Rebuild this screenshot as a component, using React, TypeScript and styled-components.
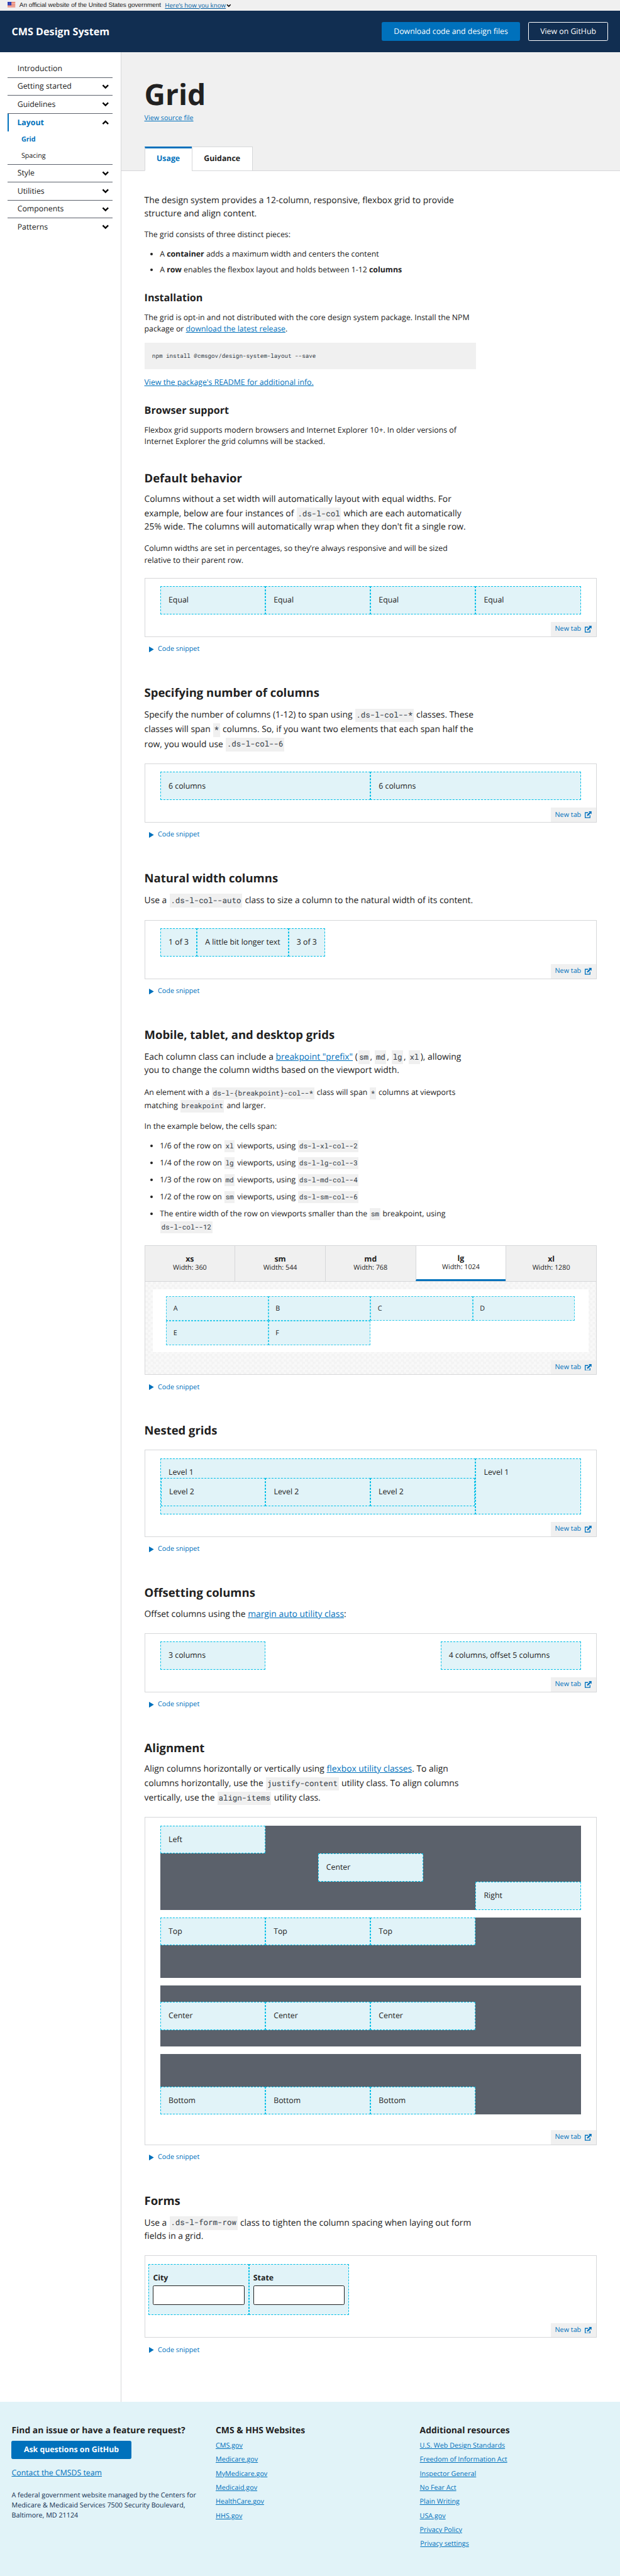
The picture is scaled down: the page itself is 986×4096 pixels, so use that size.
import React from "react";
import styled, { createGlobalStyle, css } from "styled-components";

const color = {
  ink: "#212121",
  navy: "#112e51",
  primary: "#0071bc",
  muted: "#5b616b",
  line: "#d6d7d9",
  pale: "#f0f0f0",
  sky: "#e1f3f8",
  dash: "#00bfe7",
};

const GlobalStyle = createGlobalStyle`
  *, *::before, *::after { box-sizing: border-box; }
  html, body { margin: 0; padding: 0; background: #fff; }
  body { overflow-x: hidden; text-rendering: geometricPrecision; }
  h1, h2, h3, p, ul, pre { margin: 0; padding: 0; }
`;

const Page = styled.div`
  zoom: 0.7703;
  width: 1280px;
  height: 5318px;
  overflow: hidden;
  display: flex;
  flex-direction: column;
  color: ${color.ink};
  font-family: "Open Sans", "Noto Sans", sans-serif;
  font-size: 16px;
  line-height: 24px;
`;

/* ---------- top bars ---------- */

const GovBanner = styled.div`
  height: 22px;
  padding: 0 16px;
  display: flex;
  align-items: center;
  background: ${color.pale};
  font-family: "Liberation Sans", Arial, sans-serif;
  font-size: 12.95px;
  line-height: 18px;
  white-space: nowrap;
`;

const FlagIcon = styled.svg`
  width: 16px;
  height: 11px;
  margin: 0 8px 3px 0;
`;

const BannerLink = styled.a`
  margin: 0 1px 0 8px;
  color: #005ea2;
  font-family: "Open Sans", sans-serif;
  font-size: 12.7px;
  text-decoration: underline;
`;

const Header = styled.header`
  height: 86px;
  padding: 0 24px;
  display: flex;
  align-items: center;
  background: ${color.navy};
  color: #fff;
`;

const Brand = styled.span`
  flex: 1;
  font-size: 21px;
  font-weight: 700;
`;

const Button = styled.a<{ $variant?: "solid" | "outline"; $bold?: boolean }>`
  display: inline-flex;
  align-items: center;
  justify-content: center;
  height: 38px;
  padding: 0 24px;
  border: 1px solid ${(p) => (p.$variant === "outline" ? "#fff" : color.primary)};
  border-radius: 3px;
  background: ${(p) => (p.$variant === "outline" ? "transparent" : color.primary)};
  color: #fff;
  font-size: 16px;
  font-weight: ${(p) => (p.$bold ? 700 : 400)};
  white-space: nowrap;
`;

const HeaderActions = styled.div`
  display: flex;
  gap: 16px;
`;

/* ---------- sidebar ---------- */

const Body = styled.div`
  height: 4850px;
  display: flex;
`;

const Sidebar = styled.nav`
  flex: none;
  width: 250px;
  padding: 16px;
  border-right: 1px solid ${color.line};
`;

const NavItem = styled.div<{ $current?: boolean; $rule?: boolean }>`
  height: ${(p) => (p.$rule ? 37 : 36)}px;
  padding: 0 8px 0 ${(p) => (p.$current ? 17 : 20)}px;
  display: flex;
  align-items: center;
  justify-content: space-between;
  ${(p) => p.$rule && css`border-bottom: 1px solid ${color.muted};`}
  ${(p) =>
    p.$current &&
    css`
      border-left: 3px solid ${color.primary};
      color: ${color.primary};
      font-weight: 700;
    `}
`;

const SubNav = styled.div`
  height: 69px;
  border-bottom: 1px solid ${color.muted};
`;

const SubNavItem = styled.div<{ $current?: boolean }>`
  height: 34px;
  padding-left: 28px;
  font-size: 14px;
  line-height: 34px;
  ${(p) => p.$current && css`color: ${color.primary}; font-weight: 700;`}
`;

const ChevronIcon = styled.svg<{ $size?: number; $up?: boolean }>`
  width: ${(p) => p.$size ?? 15}px;
  height: ${(p) => p.$size ?? 15}px;
  color: #000;
  ${(p) => p.$up && css`transform: rotate(180deg);`}
`;

/* ---------- main column ---------- */

const Main = styled.main`
  width: 1030px;
`;

const Hero = styled.div`
  height: 245px;
  padding: 48px 48px 0;
  display: flex;
  flex-direction: column;
  align-items: flex-start;
  background: ${color.pale};
  border-bottom: 1px solid ${color.line};
`;

const Title = styled.h1`
  font-size: 60px;
  line-height: 78px;
`;

const SourceLink = styled.a`
  font-size: 14px;
  line-height: 21px;
  color: ${color.primary};
  text-decoration: underline;
`;

const Tabs = styled.div`
  display: flex;
  margin-top: auto;
  margin-bottom: -1px;
`;

const Tab = styled.div<{ $active?: boolean }>`
  height: 50px;
  padding: ${(p) => (p.$active ? 9.5 : 12)}px 24px 0;
  border: 1px solid ${color.line};
  margin-left: ${(p) => (p.$active ? 0 : -1)}px;
  background: #fff;
  font-weight: 700;
  ${(p) =>
    p.$active &&
    css`
      color: ${color.primary};
      border-top: 4px solid ${color.primary};
      border-bottom-color: #fff;
    `}
`;

const Article = styled.div`
  padding: 48px 0 0 48px;
`;

const Heading = styled.h2<{ $top: number }>`
  margin-top: ${(p) => p.$top}px;
  font-size: 24px;
  line-height: 31px;
`;

const SubHeading = styled.h3<{ $top: number }>`
  margin-top: ${(p) => p.$top}px;
  font-size: 21px;
  line-height: 27px;
`;

const Lead = styled.p<{ $top?: number }>`
  margin-top: ${(p) => p.$top ?? 14.5}px;
  font-size: 18px;
  line-height: 27px;
  white-space: nowrap;
`;

const Text = styled.p<{ $top?: number }>`
  margin-top: ${(p) => p.$top ?? 16}px;
  white-space: nowrap;
`;

const Link = styled.a`
  color: ${color.primary};
  text-decoration: underline;
`;

const List = styled.ul<{ $top?: number; $gap?: number }>`
  margin-top: ${(p) => p.$top ?? 16}px;
  padding-left: 32px;
  white-space: nowrap;

  li { margin-bottom: ${(p) => p.$gap ?? 8}px; }
`;

const mono = css`
  font-family: "Roboto Mono", "Liberation Mono", monospace;
  color: #323a45;
`;

const Code = styled.code`
  ${mono}
  display: inline-block;
  margin: 0.125em 1px 0;
  padding: 0.185em 2px;
  background: ${color.pale};
  font-size: 0.9em;
  line-height: 1.36em;
`;

const CodeBlock = styled.pre`
  ${mono}
  width: 685px;
  height: 54px;
  margin-top: 16px;
  padding: 0 16px;
  background: ${color.pale};
  font-size: 12px;
  line-height: 54px;
`;

/* ---------- live examples ---------- */

const Frame = styled.div<{ $top?: number }>`
  width: 934px;
  margin-top: ${(p) => p.$top ?? 25.3}px;
  border: 1px solid ${color.line};
`;

const Canvas = styled.div<{ $pad?: number }>`
  padding: 16px ${(p) => p.$pad ?? 31.7}px;
`;

const Row = styled.div<{ $justify?: string }>`
  display: flex;
  justify-content: ${(p) => p.$justify ?? "flex-start"};
`;

const Cell = styled.div<{ $w?: number }>`
  ${(p) => (p.$w ? css`flex: 0 0 ${(p.$w / 12) * 100}%;` : css`flex: 0 0 auto;`)}
  padding: 15.7px;
  border: 1px dashed ${color.dash};
  background: ${color.sky};
`;

const NestedRow = styled(Row)`
  margin: 0 -15.7px;
`;

const DarkRow = styled.div<{ $align?: string }>`
  display: flex;
  align-items: ${(p) => p.$align ?? "flex-start"};
  height: 125px;
  margin-bottom: 16px;
  background: ${color.muted};
`;

const DarkStack = styled.div`
  margin-bottom: 16px;
  background: ${color.muted};
`;

const NewTab = styled.a`
  display: flex;
  align-items: center;
  gap: 8px;
  width: 93px;
  height: 29.4px;
  margin-left: auto;
  padding: 0 8px;
  background: ${color.pale};
  color: ${color.primary};
  font-size: 14px;
  white-space: nowrap;
`;

const ExternalIcon = styled.svg`
  flex: none;
  width: 14px;
  height: 14px;
`;

const SnippetToggle = styled.div`
  display: flex;
  align-items: center;
  gap: 8px;
  margin-top: 15px;
  padding-left: 10px;
  height: 21px;
  color: ${color.primary};
  font-size: 14px;
`;

const TriangleIcon = styled.svg`
  width: 10px;
  height: 12px;
`;

const SizeTabs = styled.div`
  display: flex;
  border-bottom: 1px solid ${color.line};
`;

const SizeTab = styled.div<{ $active?: boolean }>`
  flex: 1;
  height: 72px;
  display: flex;
  flex-direction: column;
  justify-content: center;
  text-align: center;
  font-size: 14px;
  line-height: 18px;
  background: ${(p) => (p.$active ? "#fff" : color.pale)};
  ${(p) => p.$active && css`border-bottom: 4px solid ${color.primary};`}
  & + & { border-left: 1px solid ${color.line}; }
`;

const SizeName = styled.b`
  font-size: 16px;
`;

const Checker = styled.div`
  padding-top: 16px;
  background: repeating-conic-gradient(#f3f3f3 0 25%, #f9f9f9 0 50%) 0 0 / 11px 11px;
`;

const Viewport = styled.div`
  width: 900px;
  height: 130px;
  margin: 0 auto 16px;
  padding: 14px 28px;
  display: grid;
  grid-template-columns: repeat(4, 1fr);
  grid-auto-rows: 51px;
  background: #fff;
`;

const MiniCell = styled.div`
  padding: 0 13.7px;
  border: 1px dashed #33cceb;
  background: ${color.sky};
  font-size: 14px;
  line-height: 49px;
`;

const FormCell = styled.div`
  width: 207px;
  height: 106px;
  padding: 15.7px 7.7px;
  border: 1px dashed ${color.dash};
  background: ${color.sky};
`;

const FieldLabel = styled.label`
  display: block;
  margin-bottom: 4px;
  font-weight: 700;
`;

const Field = styled.input`
  display: block;
  width: 189px;
  height: 40px;
  border: 2px solid ${color.ink};
  border-radius: 3px;
  background: #fff;
`;

/* ---------- footer ---------- */

const Footer = styled.footer`
  height: 360px;
  padding: 48.3px 0 0 24px;
  display: flex;
  background: ${color.sky};
`;

const FooterColumn = styled.div`
  flex: none;
  width: 421.33px;
  display: flex;
  flex-direction: column;
  align-items: flex-start;
`;

const FooterTitle = styled.h3`
  font-size: 18px;
  line-height: 23px;
  margin-bottom: 9px;
  white-space: nowrap;
`;

const ContactLink = styled(Link)`
  margin-top: 16px;
`;

const Address = styled.p`
  margin-top: 24px;
  color: ${color.navy};
  font-size: 14px;
  line-height: 21px;
  white-space: nowrap;
`;

const FooterLink = styled(Link)`
  margin-bottom: 8px;
  font-size: 14px;
  line-height: 21px;
`;

const PrivacySettings = styled(FooterLink)`
  margin-left: 1px;
`;

/* ---------- composed parts ---------- */

const Flag = () => (
  <FlagIcon viewBox="0 0 16 11">
    <rect width="16" height="11" fill="#fff" />
    {[0, 2, 4, 6, 8, 10].map((y) => (
      <rect key={y} y={y} width="16" height="1" fill="#db3e1f" />
    ))}
    <rect width="8" height="7" fill="#1e33b1" />
    {[1, 3, 5].map((y) =>
      [1, 3, 5, 7].map((x) => <circle key={`${x}-${y}`} cx={x} cy={y + 0.5} r="0.35" fill="#fff" />)
    )}
  </FlagIcon>
);

const Chevron = ({ size, up }: { size?: number; up?: boolean }) => (
  <ChevronIcon $size={size} $up={up} viewBox="0 0 15 15">
    <path d="M1.9 4.4 7.5 9.9 13.1 4.4" fill="none" stroke="currentColor" strokeWidth="3" />
  </ChevronIcon>
);

const OpenInNewTab = () => (
  <NewTab>
    New tab
    <ExternalIcon viewBox="0 0 41 41">
      <path d="M20 8.5H2.5v30h29V24" fill="none" stroke="currentColor" strokeWidth="5" />
      <path d="M23 0h18v18l-6-6-17 17-6-6 17-17z" fill="currentColor" />
    </ExternalIcon>
  </NewTab>
);

const Snippet = () => (
  <SnippetToggle>
    <TriangleIcon viewBox="0 0 10 12">
      <path d="M0 0 10 6 0 12z" fill="currentColor" />
    </TriangleIcon>
    Code snippet
  </SnippetToggle>
);

const Example = ({ pad, top, children }: { pad?: number; top?: number; children: React.ReactNode }) => (
  <>
    <Frame $top={top}>
      <Canvas $pad={pad}>{children}</Canvas>
      <OpenInNewTab />
    </Frame>
    <Snippet />
  </>
);

const breakpoints = [
  ["xs", 360],
  ["sm", 544],
  ["md", 768],
  ["lg", 1024],
  ["xl", 1280],
] as const;

const spans = [
  ["1/6", "xl", "ds-l-xl-col--2"],
  ["1/4", "lg", "ds-l-lg-col--3"],
  ["1/3", "md", "ds-l-md-col--4"],
  ["1/2", "sm", "ds-l-sm-col--6"],
];

const agencySites = ["CMS.gov", "Medicare.gov", "MyMedicare.gov", "Medicaid.gov", "HealthCare.gov", "HHS.gov"];
const resources = [
  "U.S. Web Design Standards",
  "Freedom of Information Act",
  "Inspector General",
  "No Fear Act",
  "Plain Writing",
  "USA.gov",
  "Privacy Policy",
];

const SideNav = () => (
  <Sidebar>
    <NavItem $rule>Introduction</NavItem>
    <NavItem $rule>Getting started<Chevron /></NavItem>
    <NavItem $rule>Guidelines<Chevron /></NavItem>
    <NavItem $current>Layout<Chevron up /></NavItem>
    <SubNav>
      <SubNavItem $current>Grid</SubNavItem>
      <SubNavItem>Spacing</SubNavItem>
    </SubNav>
    <NavItem $rule>Style<Chevron /></NavItem>
    <NavItem $rule>Utilities<Chevron /></NavItem>
    <NavItem $rule>Components<Chevron /></NavItem>
    <NavItem>Patterns<Chevron /></NavItem>
  </Sidebar>
);

export default function App() {
  return (
    <>
      <GlobalStyle />
      <Page>
        <GovBanner>
          <Flag />
          An official website of the United States government
          <BannerLink>Here’s how you know</BannerLink>
          <Chevron size={10} />
        </GovBanner>
        <Header>
          <Brand>CMS Design System</Brand>
          <HeaderActions>
            <Button>Download code and design files</Button>
            <Button $variant="outline">View on GitHub</Button>
          </HeaderActions>
        </Header>
        <Body>
          <SideNav />
          <Main>
            <Hero>
              <Title>Grid</Title>
              <SourceLink>View source file</SourceLink>
              <Tabs>
                <Tab $active>Usage</Tab>
                <Tab>Guidance</Tab>
              </Tabs>
            </Hero>
            <Article>
              <Lead $top={0}>
                The design system provides a 12-column, responsive, flexbox grid to provide<br />
                structure and align content.
              </Lead>
              <Text $top={18}>The grid consists of three distinct pieces:</Text>
              <List>
                <li>A <b>container</b> adds a maximum width and centers the content</li>
                <li>A <b>row</b> enables the flexbox layout and holds between 1-12 <b>columns</b></li>
              </List>
              <SubHeading $top={32}>Installation</SubHeading>
              <Text>
                The grid is opt-in and not distributed with the core design system package. Install the NPM<br />
                package or <Link>download the latest release</Link>.
              </Text>
              <CodeBlock>npm install @cmsgov/design-system-layout --save</CodeBlock>
              <Text><Link>View the package's README for additional info.</Link></Text>
              <SubHeading $top={31}>Browser support</SubHeading>
              <Text>
                Flexbox grid supports modern browsers and Internet Explorer 10+. In older versions of<br />
                Internet Explorer the grid columns will be stacked.
              </Text>

              <Heading $top={48}>Default behavior</Heading>
              <Lead $top={15.5}>
                Columns without a set width will automatically layout with equal widths. For<br />
                example, below are four instances of <Code>.ds-l-col</Code> which are each automatically<br />
                25% wide. The columns will automatically wrap when they don't fit a single row.
              </Lead>
              <Text $top={18.5}>
                Column widths are set in percentages, so they’re always responsive and will be sized<br />
                relative to their parent row.
              </Text>
              <Example top={24}>
                <Row>
                  {[0, 1, 2, 3].map((i) => <Cell key={i} $w={3}>Equal</Cell>)}
                </Row>
              </Example>

              <Heading $top={64.8}>Specifying number of columns</Heading>
              <Lead>
                Specify the number of columns (1-12) to span using <Code>.ds-l-col--*</Code> classes. These<br />
                classes will span <Code>*</Code> columns. So, if you want two elements that each span half the<br />
                row, you would use <Code>.ds-l-col--6</Code>
              </Lead>
              <Example>
                <Row>
                  <Cell $w={6}>6 columns</Cell>
                  <Cell $w={6}>6 columns</Cell>
                </Row>
              </Example>

              <Heading $top={63.4}>Natural width columns</Heading>
              <Lead>
                Use a <Code>.ds-l-col--auto</Code> class to size a column to the natural width of its content.
              </Lead>
              <Example top={25.8}>
                <Row>
                  <Cell>1 of 3</Cell>
                  <Cell>A little bit longer text</Cell>
                  <Cell>3 of 3</Cell>
                </Row>
              </Example>

              <Heading $top={64.4}>Mobile, tablet, and desktop grids</Heading>
              <Lead>
                Each column class can include a <Link>breakpoint "prefix"</Link> (<Code>sm</Code>, <Code>md</Code>,{" "}
                <Code>lg</Code>, <Code>xl</Code>), allowing<br />
                you to change the column widths based on the viewport width.
              </Lead>
              <Text $top={19}>
                An element with a <Code>{"ds-l-{breakpoint}-col--*"}</Code> class will span <Code>*</Code> columns at viewports<br />
                matching <Code>breakpoint</Code> and larger.
              </Text>
              <Text $top={17.3}>In the example below, the cells span:</Text>
              <List $top={15} $gap={8.35}>
                {spans.map(([part, size, name]) => (
                  <li key={size}>
                    {part} of the row on <Code>{size}</Code> viewports, using <Code>{name}</Code>
                  </li>
                ))}
                <li>
                  The entire width of the row on viewports smaller than the <Code>sm</Code> breakpoint, using<br />
                  <Code>ds-l-col--12</Code>
                </li>
              </List>
              <Frame $top={25.4}>
                <SizeTabs>
                  {breakpoints.map(([name, width]) => (
                    <SizeTab key={name} $active={name === "lg"}>
                      <SizeName>{name}</SizeName>
                      <span>Width: {width}</span>
                    </SizeTab>
                  ))}
                </SizeTabs>
                <Checker>
                  <Viewport>
                    {["A", "B", "C", "D", "E", "F"].map((letter) => (
                      <MiniCell key={letter}>{letter}</MiniCell>
                    ))}
                  </Viewport>
                  <OpenInNewTab />
                </Checker>
              </Frame>
              <Snippet />

              <Heading $top={64}>Nested grids</Heading>
              <Example top={23.7}>
                <Row>
                  <Cell $w={9}>
                    Level 1
                    <NestedRow>
                      {[0, 1, 2].map((i) => <Cell key={i} $w={4}>Level 2</Cell>)}
                    </NestedRow>
                  </Cell>
                  <Cell $w={3}>Level 1</Cell>
                </Row>
              </Example>

              <Heading $top={64.2}>Offsetting columns</Heading>
              <Lead $top={15.3}>Offset columns using the <Link>margin auto utility class</Link>:</Lead>
              <Example top={24.9}>
                <Row $justify="space-between">
                  <Cell $w={3}>3 columns</Cell>
                  <Cell $w={4}>4 columns, offset 5 columns</Cell>
                </Row>
              </Example>

              <Heading $top={64.9}>Alignment</Heading>
              <Lead>
                Align columns horizontally or vertically using <Link>flexbox utility classes</Link>. To align<br />
                columns horizontally, use the <Code>justify-content</Code> utility class. To align columns<br />
                vertically, use the <Code>align-items</Code> utility class.
              </Lead>
              <Example top={24.6}>
                <DarkStack>
                  <Row><Cell $w={3}>Left</Cell></Row>
                  <Row $justify="center"><Cell $w={3}>Center</Cell></Row>
                  <Row $justify="flex-end"><Cell $w={3}>Right</Cell></Row>
                </DarkStack>
                {[["Top", "flex-start"], ["Center", "center"], ["Bottom", "flex-end"]].map(([label, align]) => (
                  <DarkRow key={label} $align={align}>
                    {[0, 1, 2].map((i) => <Cell key={i} $w={3}>{label}</Cell>)}
                  </DarkRow>
                ))}
              </Example>

              <Heading $top={63.9}>Forms</Heading>
              <Lead>
                Use a <Code>.ds-l-form-row</Code> class to tighten the column spacing when laying out form<br />
                fields in a grid.
              </Lead>
              <Example pad={7.7} top={26}>
                <Row>
                  <FormCell><FieldLabel>City</FieldLabel><Field /></FormCell>
                  <FormCell><FieldLabel>State</FieldLabel><Field /></FormCell>
                </Row>
              </Example>
            </Article>
          </Main>
        </Body>
        <Footer>
          <FooterColumn>
            <FooterTitle>Find an issue or have a feature request?</FooterTitle>
            <Button $bold>Ask questions on GitHub</Button>
            <ContactLink>Contact the CMSDS team</ContactLink>
            <Address>
              A federal government website managed by the Centers for<br />
              Medicare &amp; Medicaid Services 7500 Security Boulevard,<br />
              Baltimore, MD 21124
            </Address>
          </FooterColumn>
          <FooterColumn>
            <FooterTitle>CMS &amp; HHS Websites</FooterTitle>
            {agencySites.map((name) => <FooterLink key={name}>{name}</FooterLink>)}
          </FooterColumn>
          <FooterColumn>
            <FooterTitle>Additional resources</FooterTitle>
            {resources.map((name) => <FooterLink key={name}>{name}</FooterLink>)}
            <PrivacySettings>Privacy settings</PrivacySettings>
          </FooterColumn>
        </Footer>
      </Page>
    </>
  );
}
